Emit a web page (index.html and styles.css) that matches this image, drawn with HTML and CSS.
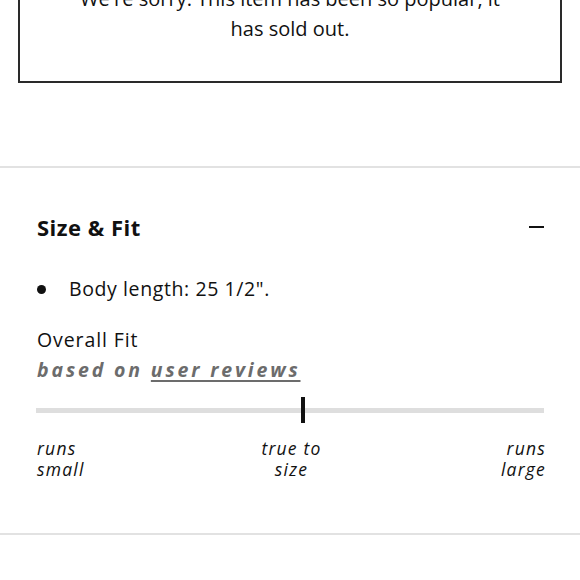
FILE: index.html
```html
<!DOCTYPE html>
<html>
<head>
<meta charset="utf-8">
<link rel="stylesheet" href="styles.css">
</head>
<body>
  <div class="soldout">
    <p>We're sorry. This item has been so popular, it<br>has sold out.</p>
  </div>
  <hr class="divider divider-top">
  <section class="size-fit">
    <div class="sf-header">
      <h2>Size &amp; Fit</h2>
      <span class="minus"></span>
    </div>
    <ul class="details">
      <li>Body length: 25 1/2".</li>
    </ul>
    <div class="fit-title">Overall Fit</div>
    <div class="fit-sub">based on <a href="#">user reviews</a></div>
    <div class="track">
      <span class="marker" style="left: 52.6%"></span>
    </div>
    <div class="labels">
      <span class="lbl lbl-left">runs<br>small</span>
      <span class="lbl lbl-mid">true to<br>size</span>
      <span class="lbl lbl-right">runs<br>large</span>
    </div>
  </section>
  <hr class="divider divider-bottom">
</body>
</html>
```

FILE: styles.css
```css
html, body {
  margin: 0;
  padding: 0;
  background: #fff;
}
body {
  font-family: "Open Sans", Lato, sans-serif;
  color: #111;
  width: 580px;
  overflow: hidden;
}
.soldout {
  margin: -60px 18px 0;
  border: 2px solid #2a2a2a;
  padding: 42px 10px 37px;
  text-align: center;
}
.soldout p {
  margin: 0;
  font-size: 20px;
  line-height: 30px;
}
.divider {
  border: 0;
  height: 2px;
  background: #e2e2e2;
  margin: 0;
}
.divider-top {
  margin-top: 83px;
}
.size-fit {
  padding: 45px 36px 0 37px;
}
.sf-header {
  display: flex;
  justify-content: space-between;
  align-items: center;
}
.sf-header h2 {
  margin: 0;
  font-size: 22px;
  line-height: 28px;
  font-weight: 700;
  letter-spacing: 0.5px;
}
.minus {
  display: block;
  width: 15px;
  height: 2.5px;
  background: #111;
}
.details {
  list-style: none;
  margin: 34px 0 0;
  padding: 0;
}
.details li {
  display: flex;
  align-items: center;
  font-size: 19.5px;
  line-height: 28px;
  letter-spacing: 0.6px;
}
.details li::before {
  content: "";
  width: 9px;
  height: 9px;
  border-radius: 50%;
  background: #111;
  margin-right: 23px;
  flex: none;
}
.fit-title {
  margin-top: 26px;
  font-size: 19.5px;
  line-height: 22px;
  letter-spacing: 0.9px;
}
.fit-sub {
  margin-top: 8px;
  font-size: 19.5px;
  line-height: 22px;
  font-style: italic;
  font-weight: 700;
  letter-spacing: 2.85px;
  color: #6c6c6c;
}
.fit-sub a {
  color: #6c6c6c;
  text-decoration: underline;
  text-underline-offset: 3px;
  text-decoration-thickness: 2px;
}
.track {
  position: relative;
  height: 5px;
  background: #dedede;
  margin: 27px 0 0 -1px;
}
.marker {
  position: absolute;
  top: -11px;
  width: 4px;
  height: 26px;
  background: #111;
  transform: translateX(-50%);
}
.labels {
  display: grid;
  grid-template-columns: 1fr auto 1fr;
  margin-top: 25px;
  margin-right: -2px;
}
.lbl {
  font-size: 17.5px;
  line-height: 21px;
  font-style: italic;
  letter-spacing: 1.2px;
}
.lbl-left { justify-self: start; }
.lbl-mid { text-align: center; }
.lbl-right { justify-self: end; text-align: right; }
.divider-bottom {
  margin-top: 53px;
}
```
